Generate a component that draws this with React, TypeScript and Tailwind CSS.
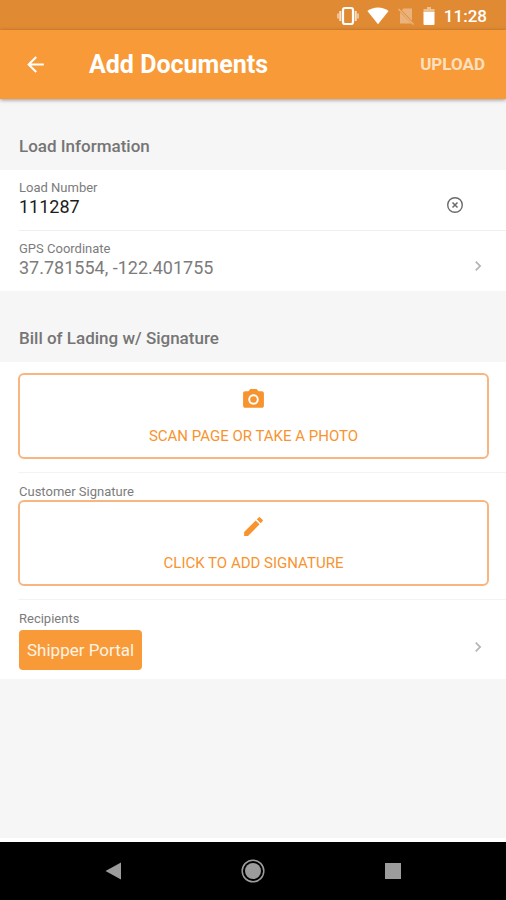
import React from "react";
import { MdArrowBack, MdChevronRight, MdEdit, MdPhotoCamera } from "react-icons/md";

const StatusBar = () => {
  return (
    <div className="flex h-[30px] shrink-0 items-center justify-end bg-[#e08b34] pt-px pr-[19px] text-white">
      <svg className="h-[22px] w-[22px]" viewBox="0 0 22 22" fill="none" stroke="currentColor">
        <rect x="6" y="3" width="10" height="16" rx="2" strokeWidth="2.2" />
        <path d="M3.3 6v10M18.7 6v10" strokeWidth="2" strokeOpacity=".75" />
        <path d="M1 8.500v5M21 8.500v5" strokeWidth="1.6" strokeOpacity=".6" />
      </svg>
      <svg className="ml-2 h-[22px] w-[22px]" viewBox="0 0 22 22" fill="currentColor">
        <path d="M11 19.2.4 6C3.4 3.700 7 2.500 11 2.500s7.600 1.200 10.600 3.500Z" />
      </svg>
      <svg className="ml-2 h-[20px] w-[18px] opacity-35" viewBox="0 0 18 20">
        <path d="M6.500 2.500H15v12.300L4.800 4.300ZM3 6.300 14.500 17.500H3Z" fill="currentColor" />
        <path d="M1.500 3 16.500 18.500" stroke="currentColor" strokeWidth="1.500" />
      </svg>
      <svg className="ml-2 h-[20px] w-[12px]" viewBox="0 0 12 20" fill="currentColor">
        <path d="M4 1h4v2h3.500v4H.5V3H4Z" fillOpacity=".45" />
        <path d="M.5 6h11v12q0 1-1 1h-9q-1 0-1-1Z" />
      </svg>
      <span className="ml-[9px] text-[17px] font-medium leading-6">11:28</span>
    </div>
  );
};

const SectionTitle = ({ children }: { children: React.ReactNode }) => (
  <h2 className="px-[19px] pt-[35px] pb-3 text-[17px] font-medium leading-6 text-[#757575]">{children}</h2>
);

const OutlineButton = ({ icon, label }: { icon: React.ReactNode; label: string }) => (
  <button
    type="button"
    className="flex h-[86px] w-full flex-col items-center rounded-md border-2 border-[#f9b580] pt-3 text-[#f7942f]"
  >
    {icon}
    <span className="mt-3 text-[15px] leading-6">{label}</span>
  </button>
);

const App = () => {
  return (
    <div className="flex min-h-screen flex-col bg-[#f6f6f6] font-[Roboto,sans-serif]">
      <StatusBar />
      <header className="flex h-[69px] shrink-0 items-center bg-[#f89a38] pr-[21px] pl-[23px] text-white shadow-[0_1px_4px_rgba(0,0,0,0.4)]">
        <button type="button" aria-label="Back">
          <MdArrowBack className="h-[25px] w-[25px]" />
        </button>
        <h1 className="ml-[41px] flex-1 text-[25px] font-bold">Add Documents</h1>
        <button type="button" className="text-[17px] font-bold text-[#fde0c0]">
          UPLOAD
        </button>
      </header>

      <main className="flex-1">
        <SectionTitle>Load Information</SectionTitle>
        <section className="bg-white pl-[19px]">
          <div className="flex items-center border-b border-[#efefef] pt-[10px] pr-[42px] pb-3">
            <div className="flex-1">
              <label htmlFor="load-number" className="block text-[13px] leading-4 text-[#7c7c7c]">
                Load Number
              </label>
              <input
                id="load-number"
                type="text"
                defaultValue="111287"
                className="block h-[22px] w-full text-[18px] leading-[22px] text-[#1c1c1c] outline-none"
              />
            </div>
            <button type="button" aria-label="Clear load number" className="pt-3">
              <svg className="h-[18px] w-[18px] text-[#6a6a6a]" viewBox="0 0 18 18" fill="none" stroke="currentColor">
                <circle cx="9" cy="9" r="7.300" strokeWidth="1.400" />
                <path d="m6.500 6.500 5 5m0-5-5 5" strokeWidth="1.500" />
              </svg>
            </button>
          </div>
          <a href="#gps" className="flex items-center pt-[10px] pr-[18px] pb-3">
            <span className="flex-1">
              <span className="block text-[13px] leading-4 text-[#7c7c7c]">GPS Coordinate</span>
              <span className="block text-[18px] leading-[22px] text-[#7c7c7c]">37.781554, -122.401755</span>
            </span>
            <MdChevronRight className="mt-3 h-5 w-5 text-[#b4b4b4]" />
          </a>
        </section>

        <SectionTitle>Bill of Lading w/ Signature</SectionTitle>
        <section className="bg-white pl-[18px]">
          <div className="border-b border-[#f3f3f3] pt-[11px] pr-[17px] pb-[13px]">
            <OutlineButton icon={<MdPhotoCamera className="h-[25px] w-[25px]" />} label="SCAN PAGE OR TAKE A PHOTO" />
          </div>
          <div className="border-b border-[#f3f3f3] pt-[11px] pr-[17px] pb-[13px]">
            <p className="pl-px text-[13px] leading-4 text-[#7c7c7c]">Customer Signature</p>
            <OutlineButton icon={<MdEdit className="h-[25px] w-[25px]" />} label="CLICK TO ADD SIGNATURE" />
          </div>
          <a href="#recipients" className="flex items-center pt-[11px] pr-[18px] pb-[9px]">
            <span className="flex-1">
              <span className="block pl-px text-[13px] leading-4 text-[#7c7c7c]">Recipients</span>
              <span className="mt-[3px] ml-px inline-block rounded bg-[#f89a38] px-2 text-[17px] leading-10 text-[#fff3e4]">
                Shipper Portal
              </span>
            </span>
            <MdChevronRight className="mt-3 h-5 w-5 text-[#b4b4b4]" />
          </a>
        </section>
      </main>

      <nav className="flex h-[62px] shrink-0 items-center justify-center gap-[116px] border-t-4 border-white bg-black text-[#9c9c9c]">
        <button type="button" aria-label="Back">
          <svg className="h-6 w-6" viewBox="0 0 24 24" fill="currentColor">
            <path d="M4.500 12 20 3.500v17Z" />
          </svg>
        </button>
        <button type="button" aria-label="Home">
          <svg className="h-6 w-6" viewBox="0 0 24 24" fill="currentColor">
            <circle cx="12" cy="12" r="8" />
            <circle cx="12" cy="12" r="10.800" fill="none" stroke="currentColor" strokeWidth="1.500" />
          </svg>
        </button>
        <button type="button" aria-label="Recent apps">
          <svg className="h-6 w-6" viewBox="0 0 24 24" fill="currentColor">
            <rect x="4" y="4" width="16" height="16" />
          </svg>
        </button>
      </nav>
    </div>
  );
};

export default App;
